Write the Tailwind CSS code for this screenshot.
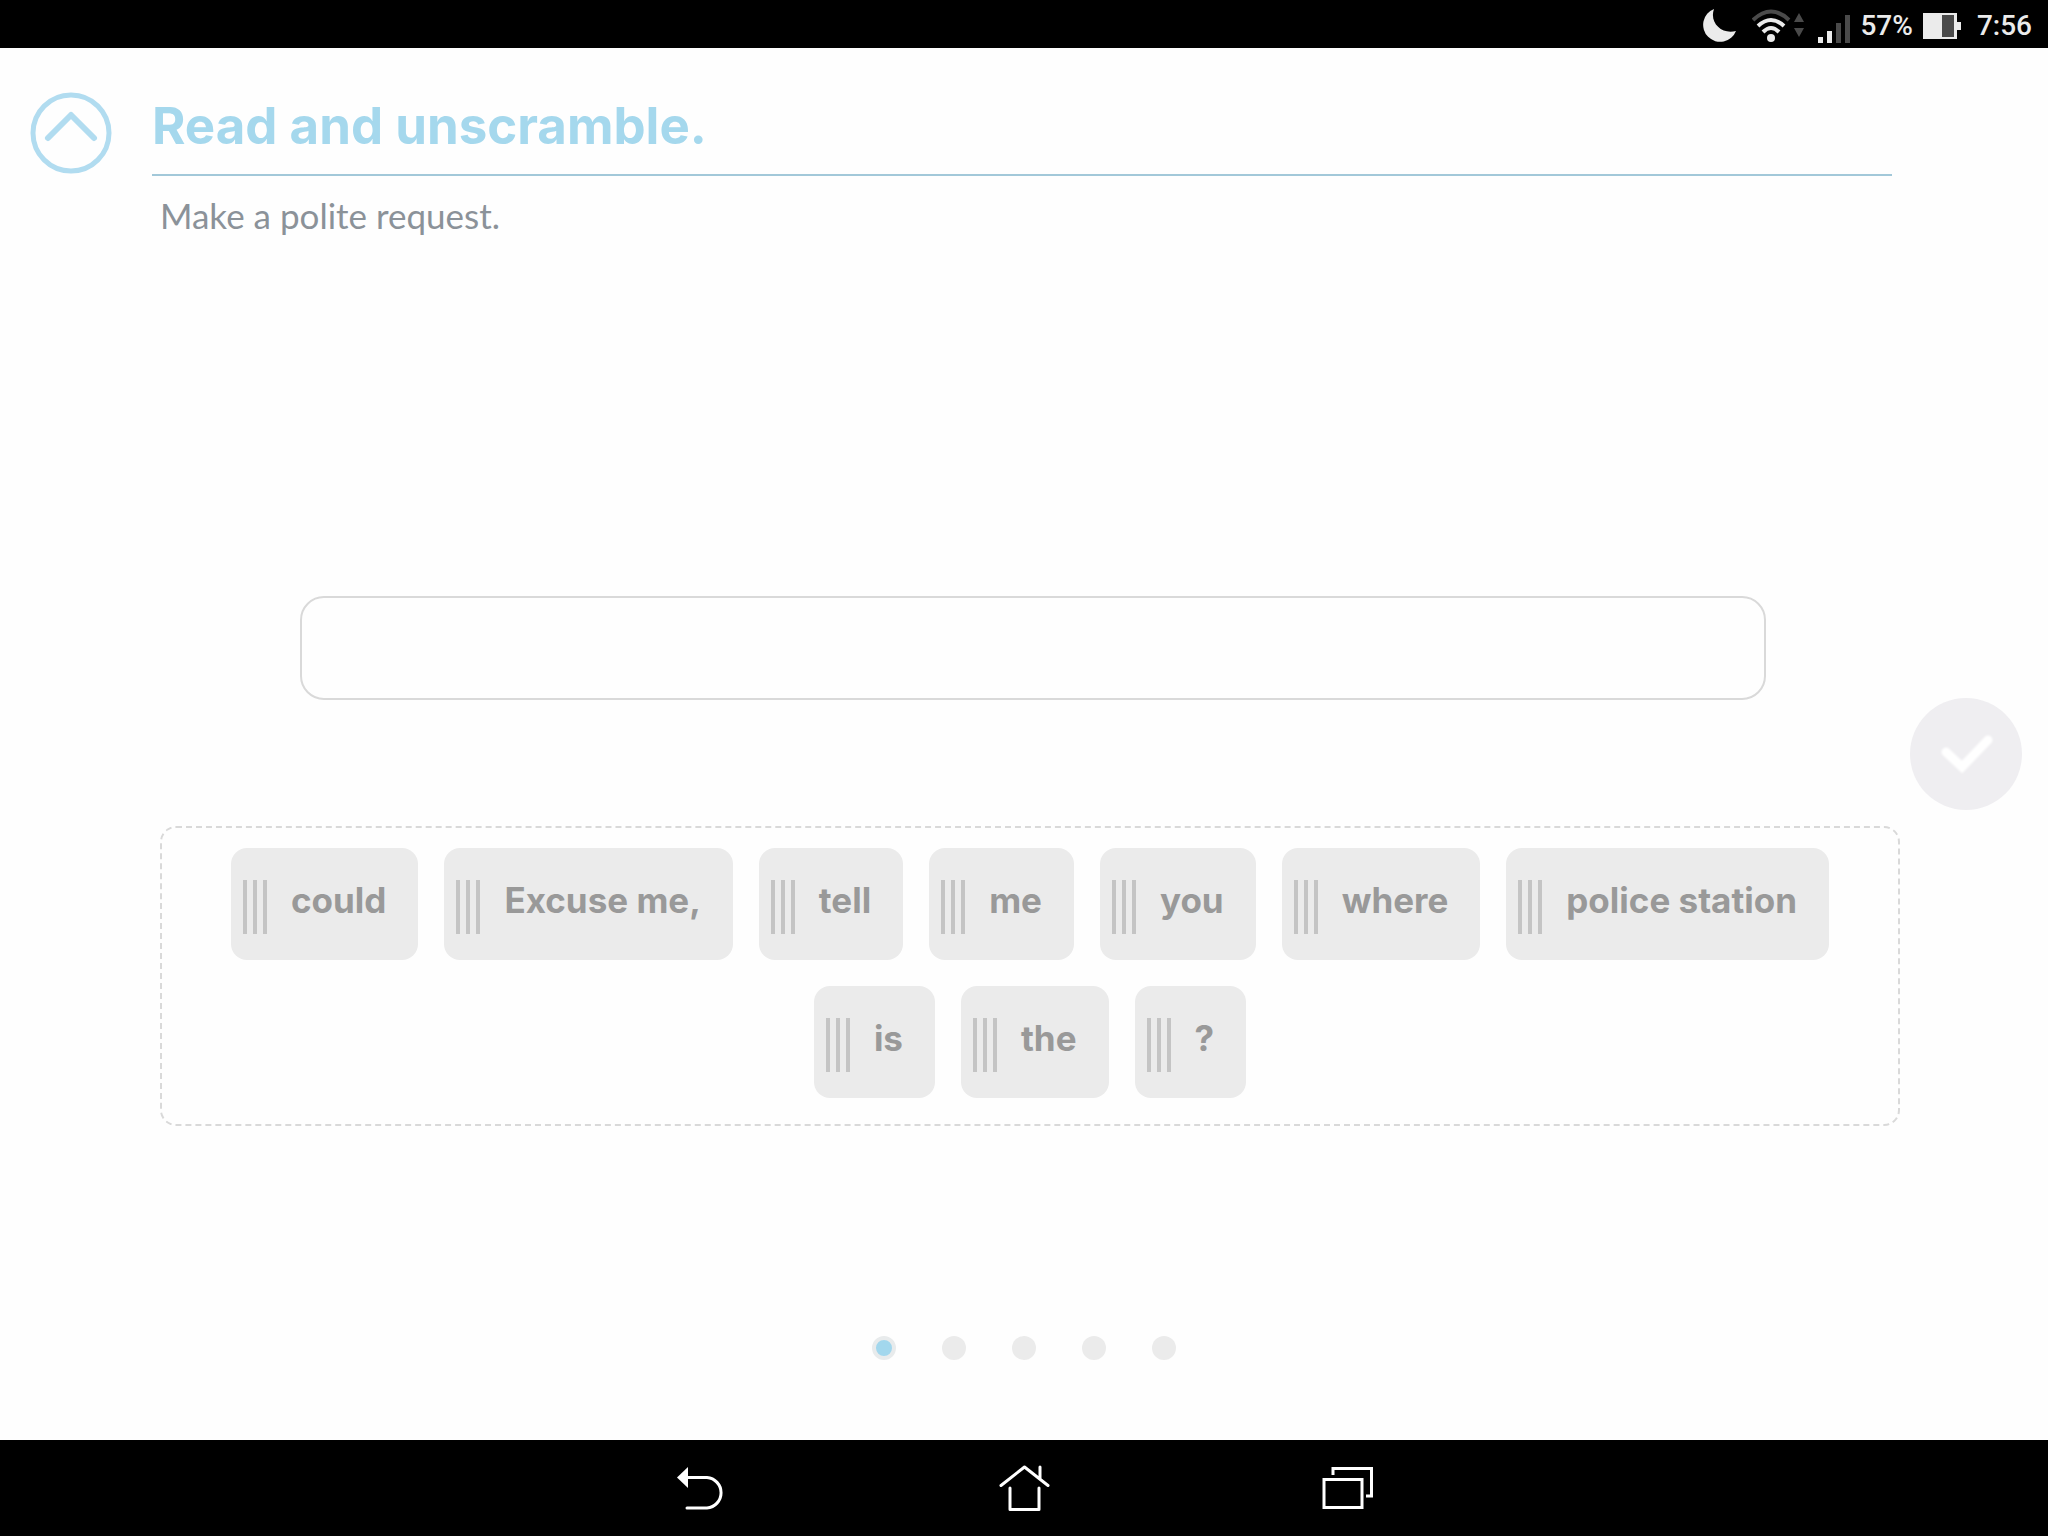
<!DOCTYPE html>
<html lang="en">
<head>
  <meta charset="UTF-8">
  <meta name="viewport" content="width=device-width, initial-scale=1.0">
  <title>Read and unscramble</title>
  <script src="https://cdn.jsdelivr.net/npm/@tailwindcss/browser@4"></script>
</head>
<body class="min-h-screen flex flex-col bg-[#fefefe] font-['Inter',sans-serif]">

  <!-- Status bar -->
  <header class="h-12 bg-black text-[#ebebeb] flex items-center justify-end pr-4 pt-1 font-['Roboto',sans-serif] text-[28px] font-medium">
    <svg class="w-[34px] h-[34px] mr-4" viewBox="0 0 34 34" fill="#ebebeb"><path d="M12 0A17 17 0 1 0 34 22C20 26 7 14 12 0z"/></svg>
    <svg class="w-[54px] h-[34px] mr-3" viewBox="0 0 54 34" fill="none" stroke-width="4">
      <path d="M1 11Q19-6 37 11" stroke="#4a4a4a"/>
      <path d="M6 17Q19 5 32 17M11 23Q19 15 27 23" stroke="#ebebeb"/>
      <circle cx="19" cy="29" r="4" fill="#ebebeb"/>
      <path d="M42 13l5-9 5 9zM42 19h10l-5 9z" fill="#4a4a4a"/>
    </svg>
    <svg class="w-8 h-[34px] mr-2.5" viewBox="0 0 32 34">
      <path d="M0 28h5v6H0zM9 22h5v12H9z" fill="#ebebeb"/>
      <path d="M18 14h5v20h-5zM27 6h5v28h-5z" fill="#4a4a4a"/>
    </svg>
    <span>57%</span>
    <svg class="w-[38px] h-[26px] ml-2.5 mr-4" viewBox="0 0 38 26">
      <path d="M0 0h34v9h4v8h-4v9H0z" fill="#ebebeb"/>
      <path d="M19 2h12v22H19z" fill="#4a4a4a"/>
    </svg>
    <span>7:56</span>
  </header>

  <!-- Exercise -->
  <main class="grow flex">
    <div class="w-38 shrink-0 pl-[30px] pt-11">
      <button type="button" aria-label="Close exercise" class="block">
        <svg class="w-[82px] h-[82px]" viewBox="0 0 82 82" fill="none" stroke="#b1dcf0" stroke-linecap="round" stroke-linejoin="round">
          <circle cx="41" cy="41" r="38" stroke-width="5"/>
          <path d="M18 46l23-23 23 23" stroke-width="6"/>
        </svg>
      </button>
    </div>

    <section class="grow flex flex-col">
      <div class="mr-2 h-32 pt-12 border-b-2 border-[#a2c8d9]">
        <h1 class="text-[51px] leading-[60px] font-bold text-[#a5d8ed]">Read and unscramble.</h1>
      </div>
      <p class="ml-2 mt-4 text-[35px] leading-[46px] text-[#8b9299] font-['Lato',sans-serif]">Make a polite request.</p>

      <!-- Answer line -->
      <div class="ml-37 mr-[134px] mt-[358px] h-26 border-2 border-[#d9d9d9] rounded-3xl" role="list" aria-label="Your answer"></div>

      <!-- Word bank -->
      <div class="ml-2 mt-[126px] pt-5 pb-6.5 px-2 flex flex-wrap justify-center gap-6.5 border-2 border-dashed border-[#d9d9d9] rounded-2xl text-[35px] leading-12 font-bold text-[#999]">
        <button type="button" class="h-28 pl-3 pr-8 flex items-start bg-[#ebebeb] rounded-2xl">
          <span class="mt-8 mr-6 w-6 h-[54px] border-x-4 border-[#c4c4c4] flex justify-center"><span class="w-1 bg-[#c4c4c4]"></span></span>
          <span class="mt-7">could</span>
        </button>
        <button type="button" class="h-28 pl-3 pr-8 flex items-start bg-[#ebebeb] rounded-2xl">
          <span class="mt-8 mr-6 w-6 h-[54px] border-x-4 border-[#c4c4c4] flex justify-center"><span class="w-1 bg-[#c4c4c4]"></span></span>
          <span class="mt-7">Excuse me,</span>
        </button>
        <button type="button" class="h-28 pl-3 pr-8 flex items-start bg-[#ebebeb] rounded-2xl">
          <span class="mt-8 mr-6 w-6 h-[54px] border-x-4 border-[#c4c4c4] flex justify-center"><span class="w-1 bg-[#c4c4c4]"></span></span>
          <span class="mt-7">tell</span>
        </button>
        <button type="button" class="h-28 pl-3 pr-8 flex items-start bg-[#ebebeb] rounded-2xl">
          <span class="mt-8 mr-6 w-6 h-[54px] border-x-4 border-[#c4c4c4] flex justify-center"><span class="w-1 bg-[#c4c4c4]"></span></span>
          <span class="mt-7">me</span>
        </button>
        <button type="button" class="h-28 pl-3 pr-8 flex items-start bg-[#ebebeb] rounded-2xl">
          <span class="mt-8 mr-6 w-6 h-[54px] border-x-4 border-[#c4c4c4] flex justify-center"><span class="w-1 bg-[#c4c4c4]"></span></span>
          <span class="mt-7">you</span>
        </button>
        <button type="button" class="h-28 pl-3 pr-8 flex items-start bg-[#ebebeb] rounded-2xl">
          <span class="mt-8 mr-6 w-6 h-[54px] border-x-4 border-[#c4c4c4] flex justify-center"><span class="w-1 bg-[#c4c4c4]"></span></span>
          <span class="mt-7">where</span>
        </button>
        <button type="button" class="h-28 pl-3 pr-8 flex items-start bg-[#ebebeb] rounded-2xl">
          <span class="mt-8 mr-6 w-6 h-[54px] border-x-4 border-[#c4c4c4] flex justify-center"><span class="w-1 bg-[#c4c4c4]"></span></span>
          <span class="mt-7">police station</span>
        </button>
        <button type="button" class="h-28 pl-3 pr-8 flex items-start bg-[#ebebeb] rounded-2xl">
          <span class="mt-8 mr-6 w-6 h-[54px] border-x-4 border-[#c4c4c4] flex justify-center"><span class="w-1 bg-[#c4c4c4]"></span></span>
          <span class="mt-7">is</span>
        </button>
        <button type="button" class="h-28 pl-3 pr-8 flex items-start bg-[#ebebeb] rounded-2xl">
          <span class="mt-8 mr-6 w-6 h-[54px] border-x-4 border-[#c4c4c4] flex justify-center"><span class="w-1 bg-[#c4c4c4]"></span></span>
          <span class="mt-7">the</span>
        </button>
        <button type="button" class="h-28 pl-3 pr-8 flex items-start bg-[#ebebeb] rounded-2xl">
          <span class="mt-8 mr-6 w-6 h-[54px] border-x-4 border-[#c4c4c4] flex justify-center"><span class="w-1 bg-[#c4c4c4]"></span></span>
          <span class="mt-7">?</span>
        </button>
      </div>

      <!-- Page dots -->
      <nav class="mt-auto mb-20 pr-1 flex justify-center gap-[46px]" aria-label="Questions">
        <a href="#q1" aria-label="Question 1" class="size-6 rounded-full bg-[#a2d7ed] border-4 border-[#e8ebec]"></a>
        <a href="#q2" aria-label="Question 2" class="size-6 rounded-full bg-[#ebebeb]"></a>
        <a href="#q3" aria-label="Question 3" class="size-6 rounded-full bg-[#ebebeb]"></a>
        <a href="#q4" aria-label="Question 4" class="size-6 rounded-full bg-[#ebebeb]"></a>
        <a href="#q5" aria-label="Question 5" class="size-6 rounded-full bg-[#ebebeb]"></a>
      </nav>
    </section>

    <div class="w-37 shrink-0 pl-2.5 pt-5 flex items-center">
      <button type="button" aria-label="Check answer" class="size-28 rounded-full bg-[#efeef1]">
        <svg class="size-28" viewBox="0 0 112 112" fill="none" stroke="#fff" stroke-width="9" stroke-linecap="round"><path class="blur-[1px]" d="M36 54l16 15 26-27"/></svg>
      </button>
    </div>
  </main>

  <!-- Navigation bar -->
  <footer class="h-24 bg-black flex items-center justify-center gap-68">
    <button type="button" aria-label="Back">
      <svg class="w-13 h-12" viewBox="0 0 52 48" fill="none" stroke="#fff" stroke-width="3" stroke-linecap="round">
        <path d="M3 13.500l11-10.500v21z" fill="#fff" stroke="none"/>
        <path d="M12 13.500h21a15.300 15.300 0 0 1 0 30.500H13"/>
      </svg>
    </button>
    <button type="button" aria-label="Home">
      <svg class="w-13 h-12" viewBox="0 0 52 48" fill="none" stroke="#fff" stroke-width="3" stroke-linecap="round" stroke-linejoin="round">
        <path d="M3 21.500L26.500 3 50 21.500M42 3v12M12 24v21.500h29V24"/>
      </svg>
    </button>
    <button type="button" aria-label="Recent apps">
      <svg class="w-13 h-12" viewBox="0 0 52 48" fill="none" stroke="#fff" stroke-width="3">
        <path d="M2 15.500h38v28H2zM11 11V4.500h38.500v27.500H44"/>
      </svg>
    </button>
  </footer>

</body>
</html>
